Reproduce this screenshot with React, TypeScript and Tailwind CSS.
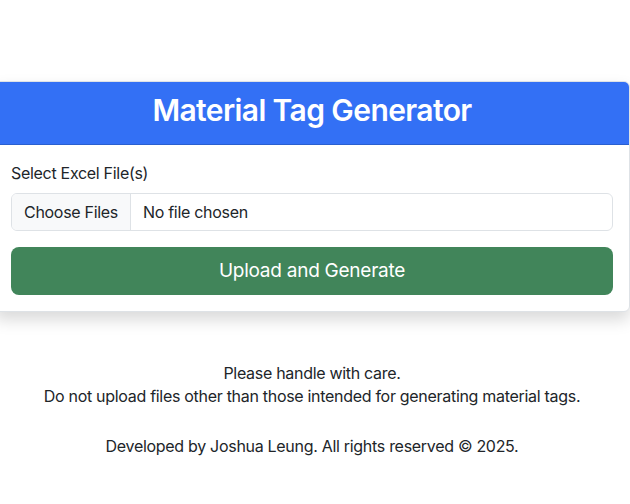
export default function App() {
  return (
    <div className="min-h-[504px] bg-white text-[#212529] font-['Inter','Liberation_Sans',Arial,sans-serif] tracking-[-0.3px] overflow-hidden">
      <div className="pt-[81px]">
        {/* Card */}
        <div className="ml-[-6px] w-[636px] rounded-[6px] border border-[#dee2e6] bg-white shadow-[0_8px_16px_rgba(0,0,0,0.15)] overflow-hidden">
          <div className="h-[63px] pb-[6px] flex items-center justify-center bg-[#3370f5] border-b border-[#2a5fcf]">
            <h1 className="text-[30px] leading-[36px] font-semibold tracking-[-0.6px] text-white">Material Tag Generator</h1>
          </div>
          <div className="p-4">
            <label className="block text-[16px] leading-[24px] mb-2">Select Excel File(s)</label>
            <div className="flex h-[38px] rounded-[6px] border border-[#dee2e6] overflow-hidden text-[16px]">
              <div className="flex items-center px-3 bg-[#f8f9fa] border-r border-[#dee2e6]">Choose Files</div>
              <div className="flex items-center px-3">No file chosen</div>
            </div>
            <button className="mt-4 w-full h-[48px] rounded-[8px] bg-[#41855a] text-white text-[19px] tracking-[-0.25px]">
              Upload and Generate
            </button>
          </div>
        </div>

        {/* Footer notes */}
        <div className="mt-[50px] pr-[6px] text-center text-[16px] leading-[23px]">
          <p>Please handle with care.</p>
          <p>Do not upload files other than those intended for generating material tags.</p>
          <p className="mt-[27px]">Developed by Joshua Leung. All rights reserved © 2025.</p>
        </div>
      </div>
    </div>
  );
}
